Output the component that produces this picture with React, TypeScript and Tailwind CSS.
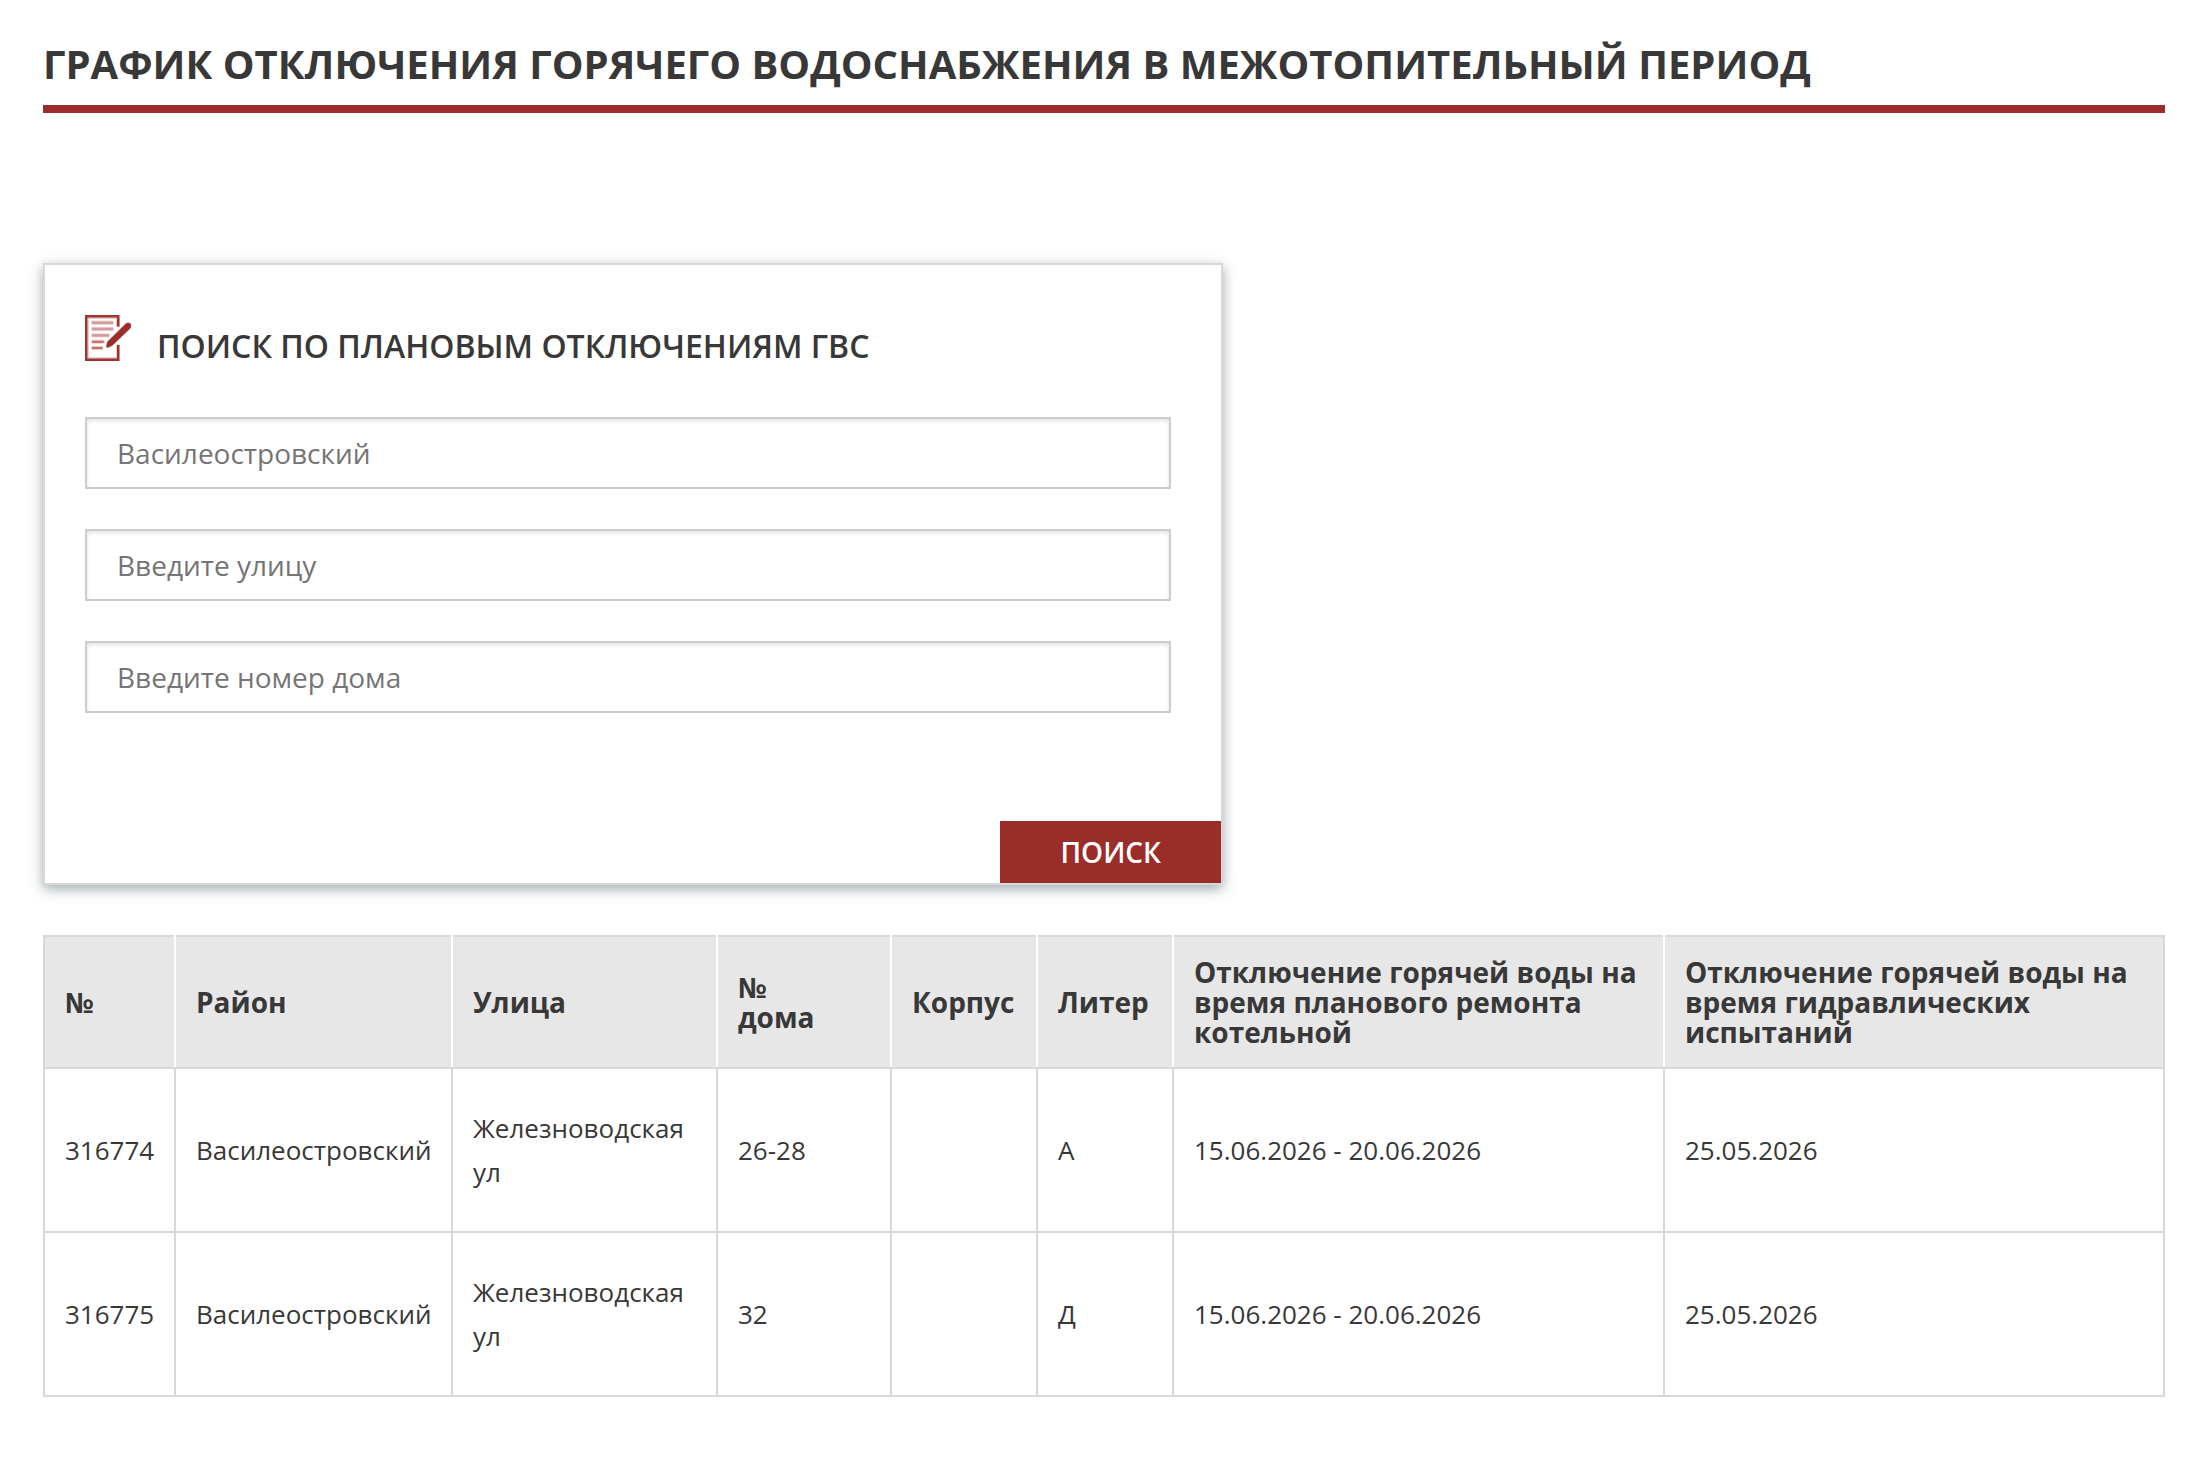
import { useState } from "react";
import type { FormEvent } from "react";

type Outage = {
  id: string;
  district: string;
  street: string;
  house: string;
  building: string;
  letter: string;
  repair: string;
  hydraulic: string;
};

const outages: Outage[] = [
  {
    id: "316774",
    district: "Василеостровский",
    street: "Железноводская ул",
    house: "26-28",
    building: "",
    letter: "А",
    repair: "15.06.2026 - 20.06.2026",
    hydraulic: "25.05.2026",
  },
  {
    id: "316775",
    district: "Василеостровский",
    street: "Железноводская ул",
    house: "32",
    building: "",
    letter: "Д",
    repair: "15.06.2026 - 20.06.2026",
    hydraulic: "25.05.2026",
  },
];

const fields = [
  { name: "district", placeholder: "Василеостровский", label: "Район" },
  { name: "street", placeholder: "Введите улицу", label: "Улица" },
  { name: "house", placeholder: "Введите номер дома", label: "Номер дома" },
];

const headCell =
  "border-2 border-x-white border-y-[#d8d8d8] px-5 text-left align-middle first:border-l-[#d8d8d8] last:border-r-[#d8d8d8]";
const bodyCell = "border-2 border-[#d8d8d8] px-5 align-middle";

function FormIcon() {
  return (
    <svg className="size-[46px] shrink-0" viewBox="0 0 46 46" fill="none" aria-hidden="true">
      <path d="M33 12V2H2V44H33V29.5" stroke="#e9cccb" strokeWidth="4" />
      <path d="M33.2 11.5V1.2H1.2V44.8H33.2V30" stroke="#9f3533" strokeWidth="2.4" />
      <g stroke="#f0dad9" strokeWidth="4.4" strokeLinecap="round">
        <path d="M8 7.7H27" />
        <path d="M8 14H27" />
        <path d="M8 20.4H23" />
        <path d="M8 26.8H18" />
        <path d="M8 33H16.5" />
      </g>
      <g stroke="#d39c9a" strokeWidth="2.6">
        <path d="M7 7.7H28" />
        <path d="M7 14H28" />
        <path d="M7 20.4H24" />
      </g>
      <g stroke="#c0706d" strokeWidth="2.2">
        <path d="M7 26.8H18.7" />
        <path d="M7 33H17.5" />
      </g>
      <path
        d="M21.3 31.6L22.2 26.9L40.2 9.2C41.8 7.6 44.2 7.4 45.5 8.8C46.8 10.2 46.3 12.4 44.9 13.8L27.4 30.4L23 32.4C22 32.7 21.2 32.4 21.3 31.6Z"
        fill="#9a2c2a"
        stroke="#b96361"
        strokeWidth="0.5"
      />
    </svg>
  );
}

function SearchForm() {
  const [values, setValues] = useState<Record<string, string>>({});

  const handleSubmit = (event: FormEvent) => {
    event.preventDefault();
  };

  return (
    <form
      onSubmit={handleSubmit}
      className="flex w-[1180px] max-w-full flex-col border-2 border-[#d8d8d8] bg-white shadow-[0_4px_12px_rgba(60,80,88,0.48)]"
    >
      <div className="flex items-start gap-[26px] px-10 pt-[50px]">
        <FormIcon />
        <h2 className="pt-2 text-[32px] leading-[46px] font-semibold">
          ПОИСК ПО ПЛАНОВЫМ ОТКЛЮЧЕНИЯМ ГВС
        </h2>
      </div>

      <div className="flex flex-col gap-10 pt-12 pr-[50px] pl-10">
        {fields.map((field) => (
          <input
            key={field.name}
            type="text"
            name={field.name}
            aria-label={field.label}
            placeholder={field.placeholder}
            value={values[field.name] ?? ""}
            onChange={(event) => setValues({ ...values, [field.name]: event.target.value })}
            className="h-[72px] w-full border-2 border-[#cccccc] px-[30px] text-[28px] shadow-[inset_0_2px_4px_rgba(0,0,0,0.12)] outline-none placeholder:text-[#757575]"
          />
        ))}
      </div>

      <button
        type="submit"
        className="mt-[108px] h-[62px] self-end bg-[#9a2c2a] px-[60px] text-[28px] font-semibold text-white"
      >
        ПОИСК
      </button>
    </form>
  );
}

function OutageTable() {
  return (
    <table className="w-full table-fixed border-collapse">
      <colgroup>
        <col className="w-[131px]" />
        <col className="w-[277px]" />
        <col className="w-[265px]" />
        <col className="w-[174px]" />
        <col className="w-[146px]" />
        <col className="w-[136px]" />
        <col className="w-[491px]" />
        <col />
      </colgroup>
      <thead>
        <tr className="h-[132px] bg-[#e7e7e7] text-[28px] leading-[30px]">
          <th className={headCell}>№</th>
          <th className={headCell}>Район</th>
          <th className={headCell}>Улица</th>
          <th className={headCell}>
            №<br />
            дома
          </th>
          <th className={headCell}>Корпус</th>
          <th className={headCell}>Литер</th>
          <th className={headCell}>Отключение горячей воды на время планового ремонта котельной</th>
          <th className={headCell}>Отключение горячей воды на время гидравлических испытаний</th>
        </tr>
      </thead>
      <tbody>
        {outages.map((outage) => (
          <tr key={outage.id} className="h-[164px] text-[26px] leading-[44px]">
            <td className={bodyCell}>{outage.id}</td>
            <td className={bodyCell}>{outage.district}</td>
            <td className={bodyCell}>{outage.street}</td>
            <td className={bodyCell}>{outage.house}</td>
            <td className={bodyCell}>{outage.building}</td>
            <td className={bodyCell}>{outage.letter}</td>
            <td className={bodyCell}>{outage.repair}</td>
            <td className={bodyCell}>{outage.hydraulic}</td>
          </tr>
        ))}
      </tbody>
    </table>
  );
}

export default function App() {
  return (
    <main className="min-h-screen bg-white pt-8 pr-[35px] pb-16 pl-[43px] font-['Open_Sans','Noto_Sans',sans-serif] text-[#383838]">
      <h1 className="border-b-8 border-[#9a2c2a] pb-[9px] text-[40px] leading-[64px] font-bold">
        ГРАФИК ОТКЛЮЧЕНИЯ ГОРЯЧЕГО ВОДОСНАБЖЕНИЯ В МЕЖОТОПИТЕЛЬНЫЙ ПЕРИОД
      </h1>

      <div className="pt-[150px] pb-[50px]">
        <SearchForm />
      </div>

      <OutageTable />
    </main>
  );
}
